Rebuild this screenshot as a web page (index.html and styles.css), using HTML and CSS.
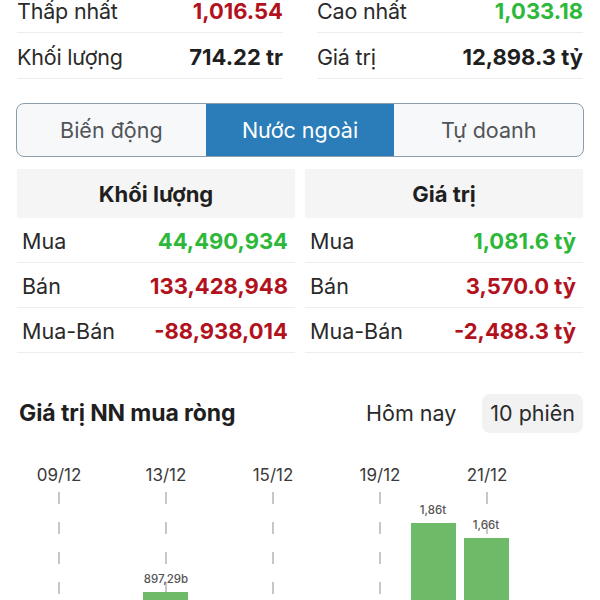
FILE: index.html
```html
<!DOCTYPE html>
<html lang="vi">
<head>
<meta charset="utf-8">
<link rel="stylesheet" href="styles.css">
</head>
<body>
<div class="page">
  <section class="stats">
    <div class="stat-col">
      <div class="stat-row"><span class="label">Thấp nhất</span><span class="val red">1,016.54</span></div>
      <div class="stat-row"><span class="label">Khối lượng</span><span class="val">714.22 tr</span></div>
    </div>
    <div class="stat-col">
      <div class="stat-row"><span class="label">Cao nhất</span><span class="val green">1,033.18</span></div>
      <div class="stat-row"><span class="label">Giá trị</span><span class="val">12,898.3 tỷ</span></div>
    </div>
  </section>

  <nav class="tabs">
    <div class="tab">Biến động</div>
    <div class="tab active">Nước ngoài</div>
    <div class="tab">Tự doanh</div>
  </nav>

  <section class="tables">
    <div class="panel">
      <div class="panel-head">Khối lượng</div>
      <div class="prow"><span class="plabel">Mua</span><span class="val green">44,490,934</span></div>
      <div class="prow"><span class="plabel">Bán</span><span class="val red">133,428,948</span></div>
      <div class="prow"><span class="plabel">Mua-Bán</span><span class="val red">-88,938,014</span></div>
    </div>
    <div class="panel">
      <div class="panel-head">Giá trị</div>
      <div class="prow"><span class="plabel">Mua</span><span class="val green">1,081.6 tỷ</span></div>
      <div class="prow"><span class="plabel">Bán</span><span class="val red">3,570.0 tỷ</span></div>
      <div class="prow"><span class="plabel">Mua-Bán</span><span class="val red">-2,488.3 tỷ</span></div>
    </div>
  </section>

  <section class="chart-head">
    <h2 class="chart-title">Giá trị NN mua ròng</h2>
    <div class="switch">
      <span class="opt">Hôm nay</span>
      <span class="opt selected">10 phiên</span>
    </div>
  </section>

  <svg class="chart" width="600" height="170" viewBox="0 0 600 170">
    <g class="dates">
      <text x="59" y="30">09/12</text>
      <text x="166" y="30">13/12</text>
      <text x="273" y="30">15/12</text>
      <text x="380" y="30">19/12</text>
      <text x="487" y="30">21/12</text>
    </g>
    <g class="grid">
      <line x1="59" y1="41" x2="59" y2="170"/>
      <line x1="166" y1="41" x2="166" y2="170"/>
      <line x1="273" y1="41" x2="273" y2="170"/>
      <line x1="380" y1="41" x2="380" y2="170"/>
      <line x1="487" y1="41" x2="487" y2="170"/>
    </g>
    <g class="bars">
      <rect x="143" y="141" width="45" height="40"/>
      <rect x="411" y="72" width="45" height="110"/>
      <rect x="464" y="87" width="45" height="95"/>
    </g>
    <g class="blabels">
      <text x="166" y="132">897,29b</text>
      <text x="433" y="63">1,86t</text>
      <text x="486" y="78">1,66t</text>
    </g>
  </svg>
</div>
</body>
</html>
```
FILE: styles.css
```css
* { box-sizing: border-box; margin: 0; padding: 0; }
html, body { background: #fff; }
body { margin: 0; overflow: hidden; font-family: Inter, "Noto Sans", "Liberation Sans", sans-serif; color: #1f1f1f; }
.page { width: 600px; }

.stats { display: flex; gap: 34px; padding: 0 17px; margin-top: -13px; }
.stat-col { flex: 1; display: flex; flex-direction: column; }
.stat-row { height: 46px; padding-top: 3px; display: flex; align-items: center; justify-content: space-between; border-bottom: 1px solid #ededed; }
.label { color: #2a2a2a; font-size: 21.5px; letter-spacing: -0.2px; }
.val { font-weight: 700; font-size: 22px; color: #1f1f1f; }
.red { color: #b2121d; }
.green { color: #2db83a; }

.tabs { display: flex; margin: 24px 16px 0; height: 54px; border: 1.5px solid #8c9dab; border-radius: 8px; overflow: hidden; background: #f7f8fa; }
.tab { flex: 1; display: flex; align-items: center; justify-content: center; font-size: 21.5px; color: #505458; }
.tab.active { background: #2a7db8; color: #fff; }

.tables { display: flex; gap: 10px; margin: 12px 17px 0; }
.panel { flex: 1; display: flex; flex-direction: column; }
.panel-head { height: 49px; background: #f5f5f5; display: flex; align-items: center; justify-content: center; font-weight: 700; font-size: 22px; color: #1f1f1f; }
.prow { height: 45px; display: flex; align-items: center; justify-content: space-between; padding: 2px 7px 0 5px; border-bottom: 1px solid #eeeeee; }
.plabel { color: #2a2a2a; font-size: 21.5px; }

.chart-head { display: flex; align-items: center; justify-content: space-between; margin: 40px 17px 0 19px; height: 40px; }
.chart-title { font-size: 23px; font-weight: 700; color: #1f1f1f; letter-spacing: -0.1px; }
.switch { display: flex; align-items: center; gap: 26px; }
.opt { font-size: 21.5px; color: #2a2a2a; }
.opt.selected { background: #f2f2f2; border-radius: 8px; padding: 0 8px; height: 39px; display: flex; align-items: center; }

.chart { display: block; margin-top: 18px; }
.dates text { font-size: 17px; fill: #3a3a3a; text-anchor: middle; font-family: Inter, "Liberation Sans", sans-serif; }
.grid line { stroke: #b5b5b5; stroke-width: 1.5; stroke-dasharray: 12 18; }
.bars rect { fill: #6dbb69; }
.blabels text { font-size: 11.5px; fill: #555; text-anchor: middle; font-weight: 500; font-family: Inter, "Liberation Sans", sans-serif; }
```
